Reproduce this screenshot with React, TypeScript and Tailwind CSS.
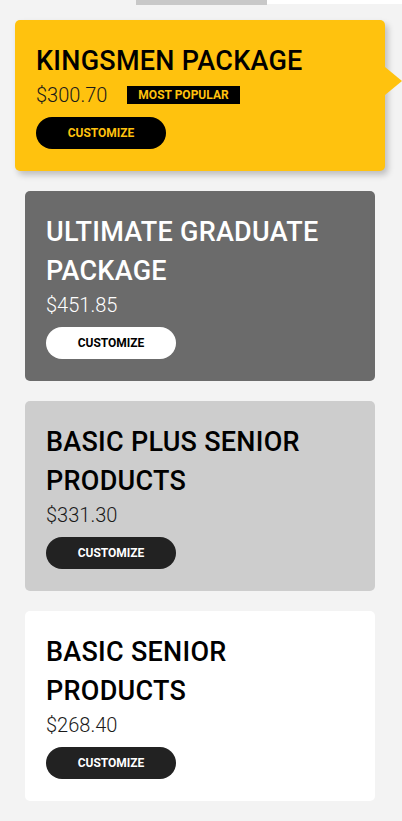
import React from 'react';

type Pkg = {
  name: string;
  price: string;
  theme: 'yellow' | 'dark' | 'light' | 'white';
  popular?: boolean;
};

const packages: Pkg[] = [
  { name: 'KINGSMEN PACKAGE', price: '$300.70', theme: 'yellow', popular: true },
  { name: 'ULTIMATE GRADUATE PACKAGE', price: '$451.85', theme: 'dark' },
  { name: 'BASIC PLUS SENIOR PRODUCTS', price: '$331.30', theme: 'light' },
  { name: 'BASIC SENIOR PRODUCTS', price: '$268.40', theme: 'white' },
];

const themes = {
  yellow: {
    card: 'bg-[#ffc20e] text-black shadow-[3px_4px_6px_rgba(0,0,0,0.22)] ml-[15px] mr-[17px]',
    price: 'text-[#1a1a1a]',
    button: 'bg-black text-[#ffc20e]',
  },
  dark: {
    card: 'bg-[#6b6b6b] text-white ml-[25px] mr-[27px]',
    price: 'text-white',
    button: 'bg-white text-black',
  },
  light: {
    card: 'bg-[#cdcdcd] text-black ml-[25px] mr-[27px]',
    price: 'text-[#1a1a1a]',
    button: 'bg-[#222222] text-white',
  },
  white: {
    card: 'bg-white text-black ml-[25px] mr-[27px]',
    price: 'text-[#1a1a1a]',
    button: 'bg-[#222222] text-white',
  },
};

function PackageCard({ pkg }: { pkg: Pkg }) {
  const t = themes[pkg.theme];
  return (
    <div className={`relative rounded-[5px] px-[21px] pt-[22px] pb-[22px] ${t.card}`}>
      <h2 className="pr-4 text-[27px] leading-[39px] font-medium tracking-[0.01em]">{pkg.name}</h2>
      <div className="flex items-center gap-5">
        <span className={`text-[20px] leading-[28px] font-light ${t.price}`}>{pkg.price}</span>
        {pkg.popular && (
          <span className="flex h-[18px] items-center bg-black px-[11px] text-[12px] font-bold text-[#ffc20e]">
            MOST POPULAR
          </span>
        )}
      </div>
      <button className={`mt-2 flex h-8 w-[130px] items-center justify-center rounded-full text-[12px] font-bold ${t.button}`}>
        CUSTOMIZE
      </button>
      {pkg.popular && (
        <span className="absolute left-full top-[47px] h-0 w-0 border-y-[14px] border-l-[17px] border-y-transparent border-l-[#ffc20e]" />
      )}
    </div>
  );
}

export default function App() {
  return (
    <div className="min-h-[821px] overflow-hidden bg-[#f3f3f3] font-['Roboto',sans-serif]">
      {/* tab strip */}
      <div className="flex h-[5px] items-start">
        <div className="w-[136px]" />
        <div className="h-[5px] w-[131px] bg-[#c8c8c8]" />
        <div className="h-1 flex-1 bg-white" />
      </div>

      <div className="flex flex-col gap-5 pt-[15px] pb-5">
        {packages.map((p) => (
          <PackageCard key={p.name} pkg={p} />
        ))}
      </div>
    </div>
  );
}
